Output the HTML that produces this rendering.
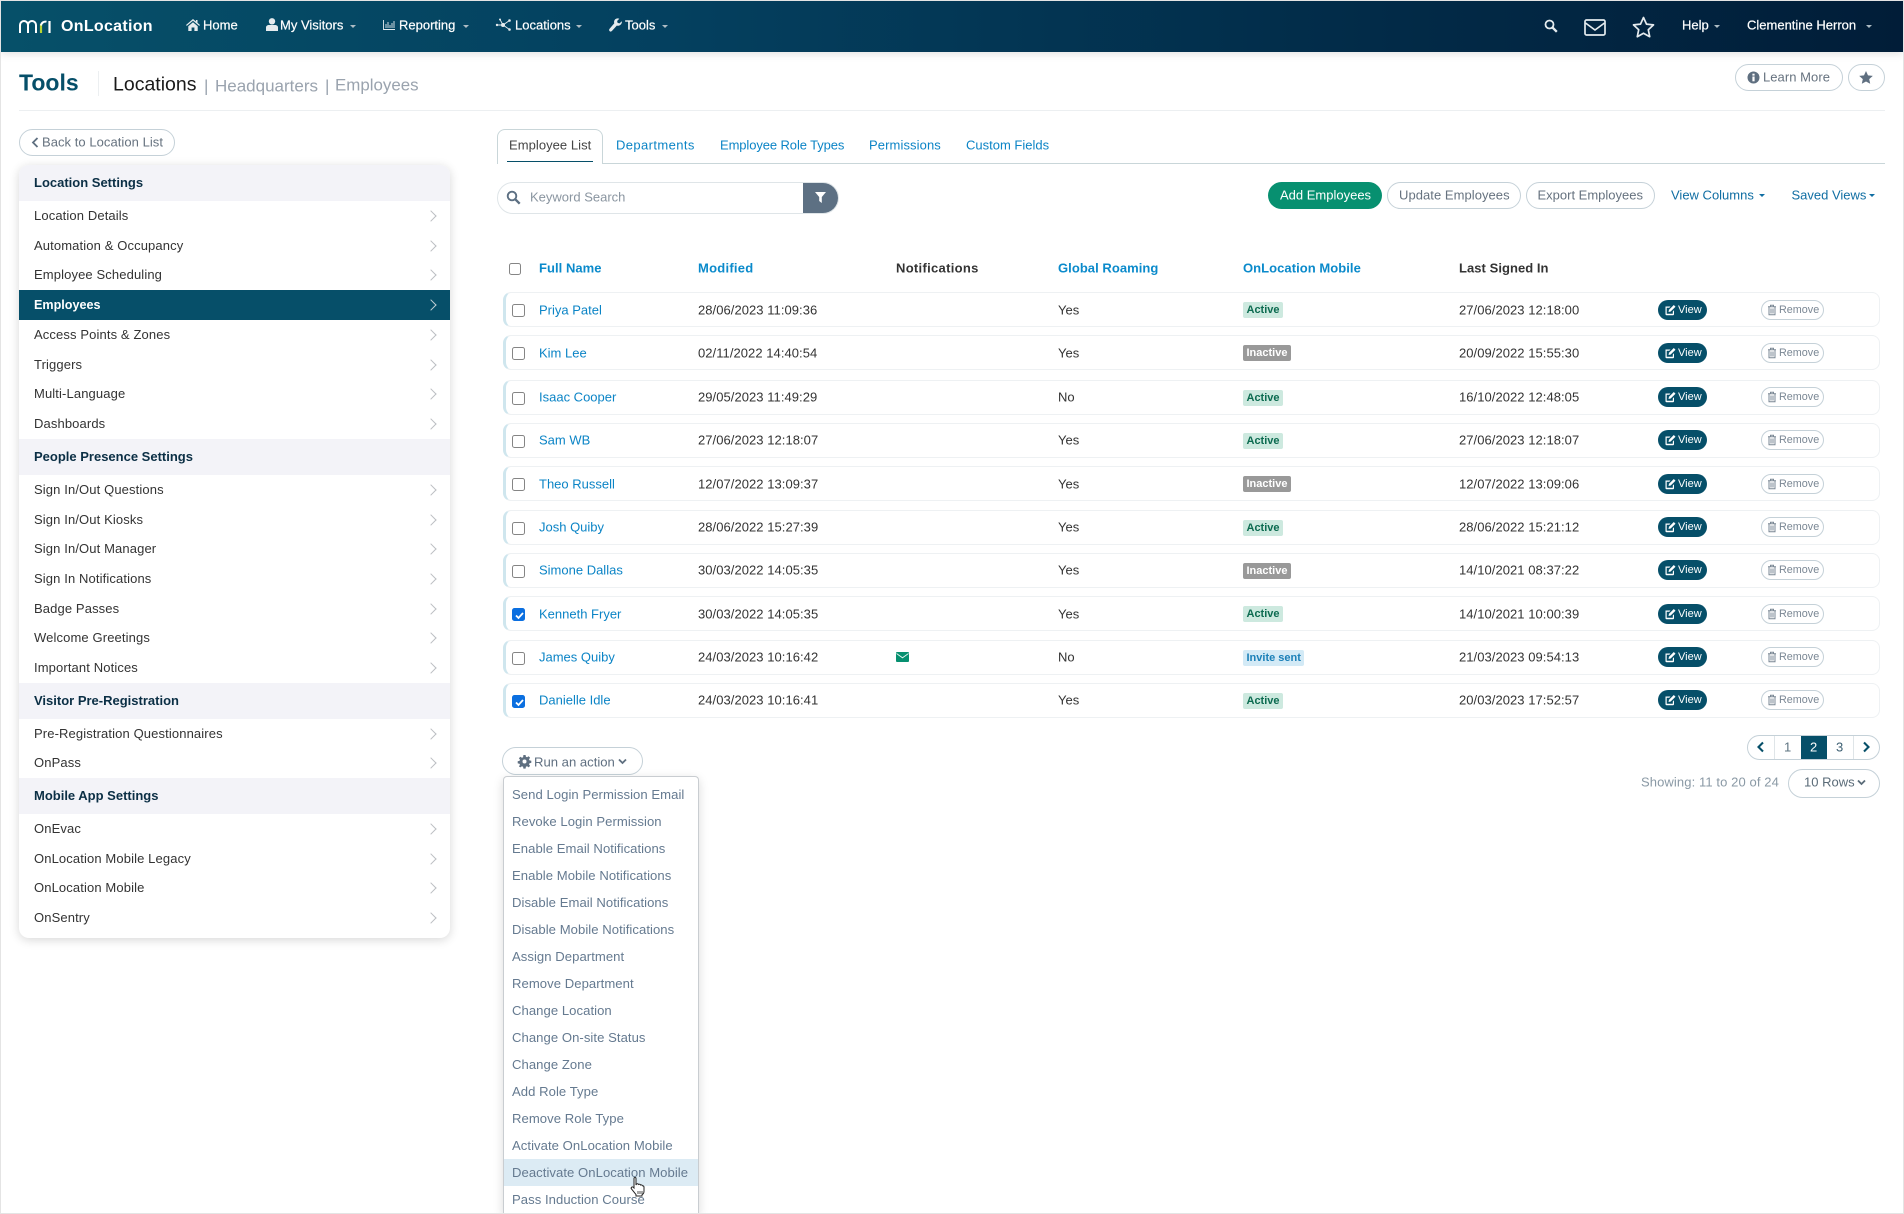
<!DOCTYPE html>
<html lang="en"><head><meta charset="utf-8"><title>Tools - Employees</title>
<style>
*{box-sizing:border-box}
html,body{margin:0;padding:0;background:#fff;overflow:hidden;width:1904px;height:1214px}
#page{width:1904px;height:1214px;position:relative;overflow:hidden;font-family:"Liberation Sans",sans-serif;font-size:13px;color:#333}
.a{position:absolute;white-space:nowrap;line-height:1;transform:translateY(-50%)}
.box{position:absolute}
.n{color:#fff;font-size:13px;-webkit-text-stroke:.2px #fff}
.car{position:absolute;width:0;height:0;border-left:3px solid transparent;border-right:3px solid transparent;border-top:3px solid currentColor}
.pill{position:absolute;border:1px solid #c5d1d8;border-radius:15px;background:#fff}
svg{position:absolute;overflow:visible}
/* sidebar */
#side{position:absolute;left:19px;top:165px;width:431px;height:773px;background:#fff;border-radius:10px;box-shadow:0 2px 10px rgba(0,0,0,.16);overflow:hidden}
#side .h{height:36px;background:#f3f3f8;color:#0b2f45;font-weight:bold;font-size:13px;line-height:35px;padding-left:15px}
#side .i{height:29.7px;line-height:30.7px;padding-left:15px;font-size:13px;letter-spacing:.12px;color:#333;position:relative}
#side .i:after{content:"";position:absolute;right:15.5px;top:11px;width:7px;height:7px;border-top:1.5px solid #bbbec2;border-right:1.5px solid #bbbec2;transform:rotate(45deg)}
#side .on{background:#064f69;color:#fff;font-weight:bold;font-size:12.6px;height:30px;line-height:31px;letter-spacing:0}
#side .on:after{border-color:#c3d0d6}
/* table */
.r{position:absolute;left:0;width:1904px;height:0}
.b{position:absolute;left:503px;width:1377px;top:-17.5px;height:35px;background:#fff;border:1px solid #eef1f3;border-left:3px solid #cfe6ee;border-radius:8px}
.r .a{top:0}
.c{position:absolute;left:512px;top:-5.5px;width:13px;height:13px;border:1px solid #858585;border-radius:2.5px;background:#fff}
.c.k{background:#0b6fe0;border-color:#0b6fe0}
.nm{left:539px;color:#0b84c6}
.d1{left:698px;letter-spacing:.05px}.g{left:1058px}.d2{left:1459px;letter-spacing:.05px}
.bd{position:absolute;left:1243px;top:-7.5px;height:16px;border-radius:2px;font-size:11px;font-weight:bold;line-height:16px;padding:0 3.5px}
.ac{background:#cde9df;color:#0c6b50}
.in{background:#999;color:#fff}
.is{background:#d3eaf6;color:#1b80b8}
.v{position:absolute;left:1658px;top:-10px;width:49px;height:20px;border-radius:10px;background:#064f69}
.v b{position:absolute;left:20px;top:0;line-height:20px;font-size:11px;color:#fff;font-weight:normal}
.x{position:absolute;left:1761px;top:-10px;width:63px;height:20px;border-radius:10px;background:#fff;border:1px solid #c5d1d8}
.x b{position:absolute;left:17px;top:0;line-height:18px;font-size:10.8px;color:#7a8794;font-weight:normal}
.th{font-weight:bold;top:268px;color:#0a8acb;letter-spacing:.05px}
/* menu */
#menu{position:absolute;left:503px;top:776px;width:196px;height:438px;background:#fff;border:1px solid #c9cdd1;border-bottom:0;border-radius:4px 4px 0 0;box-shadow:0 3px 10px rgba(0,0,0,.15);overflow:hidden}
#menu div{height:27px;line-height:27px;padding-left:8px;font-size:13.1px;letter-spacing:.05px;color:#657a90;white-space:nowrap}
#menu .sel{background:#dcebf4}
#frame{position:absolute;left:0;top:0;width:1904px;height:1214px;border:1px solid #e4e4e4;pointer-events:none}
</style></head><body><div id="page">

<svg width="0" height="0" style="position:absolute"><defs>
<symbol id="ed" viewBox="0 0 12 12"><path d="M1.5 2.5h5L5.3 3.7H2.700v6.100h6.100V7.500L10 6.300v3.900a1 1 0 0 1-1 1H2.500a1 1 0 0 1-1-1z" fill="currentColor"/><path d="M4.500 8 5 5.800 9.800 1l1.700 1.700L6.700 7.500z" fill="currentColor"/></symbol>
<symbol id="tr" viewBox="0 0 12 12"><path d="M2 2.800h8M4.500 2.600V1.200h3v1.400M3 3v7.800h6V3M5 4.500v5M7 4.500v5" fill="none" stroke="currentColor" stroke-width="1"/></symbol>
</defs></svg>

<!-- Header -->
<div class="box" style="left:1px;top:1px;width:1902px;height:51px;background:linear-gradient(90deg,#065069 0%,#04405f 35%,#022c49 70%,#011d38 100%);box-shadow:0 2px 8px rgba(0,0,0,.12)"></div>
<svg style="left:19px;top:20px" width="33" height="13" viewBox="0 0 33 13"><path d="M1 13V5a4 4 0 0 1 8 0V13M9 5a4 4 0 0 1 8 0V13" fill="none" stroke="#fff" stroke-width="2"/><path d="M22 13V4" fill="none" stroke="#b7d433" stroke-width="2.200"/><path d="M22 5.500a4.500 4.500 0 0 1 5.500-3.800" fill="none" stroke="#fff" stroke-width="2"/><path d="M30.500 13V1" fill="none" stroke="#fff" stroke-width="2.200"/></svg>
<div class="a" style="left:61px;top:27px;color:#fff;font-weight:bold;font-size:16px;letter-spacing:.3px">OnLocation</div>

<svg style="left:186px;top:19px" width="14" height="12" viewBox="0 0 14 12"><path d="M7 0 0 6l.8.900L7 1.700l6.200 5.200.8-.9-2.500-2.100V1h-1.600v1.500z" fill="#e5ebee"/><path d="M2.300 7.200 7 3.300l4.700 3.900V12H8.400V8.500H5.600V12H2.300z" fill="#e5ebee"/></svg>
<div class="a n" style="left:203px;top:25px">Home</div>
<svg style="left:266px;top:18px" width="12" height="13" viewBox="0 0 12 13"><circle cx="6" cy="3.300" r="3.200" fill="#e5ebee"/><path d="M0 13V9.500C0 7.800 1.500 7 3 7h6c1.500 0 3 .8 3 2.500V13z" fill="#e5ebee"/></svg>
<div class="a n" style="left:280px;top:25px">My Visitors</div><div class="car" style="left:350px;top:25px;color:#aebcc4"></div>
<svg style="left:383px;top:20px" width="12" height="10" viewBox="0 0 12 10"><path d="M.5 0v9.500H12M3 8V4M5 8V2M7 8V5M9 8V3M11 8V1" stroke="#e5ebee" stroke-width=".9" fill="none"/></svg>
<div class="a n" style="left:399px;top:25px">Reporting</div><div class="car" style="left:463px;top:25px;color:#aebcc4"></div>
<svg style="left:496px;top:18px" width="15" height="14" viewBox="0 0 15 14"><path d="M1 7h6l6.500-4.500M7 7l6.500 4.500M7 7 4 1.500" stroke="#e5ebee" stroke-width=".9" fill="none"/><circle cx="7" cy="7" r="2" fill="#e5ebee"/><circle cx="1" cy="7" r="1.200" fill="#e5ebee"/><circle cx="13.500" cy="2.500" r="1.300" fill="#e5ebee"/><circle cx="13.500" cy="11.500" r="1.300" fill="#e5ebee"/><circle cx="4" cy="1.500" r="1" fill="#e5ebee"/></svg>
<div class="a n" style="left:515px;top:25px">Locations</div><div class="car" style="left:576px;top:25px;color:#aebcc4"></div>
<svg style="left:609px;top:18px" width="13" height="14" viewBox="0 0 13 14"><path d="M12.800 3.200 10.500 5.400 8.600 4.900 8.100 3 10.300.7C8.500 0 6.400.6 5.500 2.200c-.5 1-.6 2.100-.2 3.100L.6 10.800c-.7.800-.7 1.700 0 2.300.7.700 1.600.6 2.300-.1l4.900-5.400c1.200.4 2.600.2 3.600-.7 1.200-1 1.800-2.800 1.400-3.700z" fill="#e5ebee"/></svg>
<div class="a n" style="left:625px;top:25px">Tools</div><div class="car" style="left:662px;top:25px;color:#aebcc4"></div>

<svg style="left:1544px;top:19px" width="14" height="14" viewBox="0 0 14 14"><circle cx="5.500" cy="5.500" r="4" fill="none" stroke="#e5ebee" stroke-width="1.800"/><path d="m8.500 8.500 4.300 4.300" stroke="#e5ebee" stroke-width="2.300"/></svg>
<svg style="left:1584px;top:19px" width="22" height="17" viewBox="0 0 22 17"><rect x="1" y="1" width="20" height="15" rx="1.500" fill="none" stroke="#e5ebee" stroke-width="1.700"/><path d="m1.500 4 9.500 7 9.500-7" fill="none" stroke="#e5ebee" stroke-width="1.700"/></svg>
<svg style="left:1632px;top:16px" width="23" height="22" viewBox="0 0 23 22"><path d="m11.500 1.500 3 6.600 7 .8-5.200 4.800 1.400 7-6.200-3.500-6.200 3.500 1.400-7L1.500 8.900l7-.8z" fill="none" stroke="#e5ebee" stroke-width="1.700" stroke-linejoin="round"/></svg>
<div class="a n" style="left:1682px;top:25px">Help</div><div class="car" style="left:1714px;top:25px;color:#aebcc4"></div>
<div class="a n" style="left:1747px;top:25px">Clementine Herron</div><div class="car" style="left:1866px;top:25px;color:#aebcc4"></div>

<!-- Title -->
<div class="a" style="left:19px;top:83px;font-size:23px;font-weight:bold;color:#064f69">Tools</div>
<div class="box" style="left:98px;top:71px;width:1px;height:25px;background:#eceff1"></div>
<div class="a" style="left:113px;top:85px;font-size:19.5px;color:#1a1a1a">Locations</div>
<div class="a" style="left:204px;top:86px;font-size:17px;color:#9aa3ae">|</div>
<div class="a" style="left:215px;top:86px;font-size:17px;color:#9aa3ae">Headquarters</div>
<div class="a" style="left:325px;top:86px;font-size:17px;color:#9aa3ae">|</div>
<div class="a" style="left:335px;top:86px;font-size:16.9px;color:#9aa3ae">Employees</div>
<div class="box" style="left:19px;top:110px;width:1866px;height:1px;background:#eceff1"></div>

<div class="pill" style="left:1735px;top:64px;width:108px;height:27px"></div>
<svg style="left:1747px;top:71px" width="13" height="13" viewBox="0 0 13 13"><circle cx="6.500" cy="6.500" r="6" fill="#5f6f80"/><rect x="5.400" y="5.500" width="2.200" height="4.800" fill="#fff"/><rect x="5.400" y="2.700" width="2.200" height="1.900" fill="#fff"/></svg>
<div class="a" style="left:1763px;top:77px;color:#66727f;letter-spacing:.05px">Learn More</div>
<div class="pill" style="left:1848px;top:64px;width:37px;height:27px"></div>
<svg style="left:1859px;top:71px" width="14" height="13" viewBox="0 0 14 13"><path d="m7 0 2 4.400 4.800.5-3.600 3.200 1 4.700L7 10.500l-4.200 2.300 1-4.700L.2 4.900 5 4.400z" fill="#5f6f80"/></svg>

<!-- Back button -->
<div class="pill" style="left:19px;top:129px;width:156px;height:27px"></div>
<svg style="left:31px;top:137px" width="8" height="11" viewBox="0 0 8 11"><path d="M6.500 1 2 5.500 6.500 10" fill="none" stroke="#5f6f80" stroke-width="1.800"/></svg>
<div class="a" style="left:42px;top:142px;color:#66727f;letter-spacing:.05px">Back to Location List</div>

<!-- Sidebar -->
<div id="side">
<div class="h">Location Settings</div>
<div class="i">Location Details</div>
<div class="i">Automation &amp; Occupancy</div>
<div class="i">Employee Scheduling</div>
<div class="i on">Employees</div>
<div class="i">Access Points &amp; Zones</div>
<div class="i">Triggers</div>
<div class="i">Multi-Language</div>
<div class="i">Dashboards</div>
<div class="h">People Presence Settings</div>
<div class="i">Sign In/Out Questions</div>
<div class="i">Sign In/Out Kiosks</div>
<div class="i">Sign In/Out Manager</div>
<div class="i">Sign In Notifications</div>
<div class="i">Badge Passes</div>
<div class="i">Welcome Greetings</div>
<div class="i">Important Notices</div>
<div class="h">Visitor Pre-Registration</div>
<div class="i">Pre-Registration Questionnaires</div>
<div class="i">OnPass</div>
<div class="h">Mobile App Settings</div>
<div class="i">OnEvac</div>
<div class="i">OnLocation Mobile Legacy</div>
<div class="i">OnLocation Mobile</div>
<div class="i">OnSentry</div>
</div>

<!-- Tabs -->
<div class="box" style="left:497px;top:163px;width:1388px;height:1px;background:#c9d6d9"></div>
<div class="box" style="left:497px;top:129px;width:106px;height:35px;background:#fff;border:1px solid #c9d6d9;border-bottom:0;border-radius:8px 8px 0 0"></div>
<div class="box" style="left:507px;top:161px;width:86px;height:1px;background:#064f69"></div>
<div class="a" style="left:509px;top:145px;color:#444;letter-spacing:.05px">Employee List</div>
<div class="a" style="left:616px;top:145px;color:#0b84c6;letter-spacing:.4px">Departments</div>
<div class="a" style="left:720px;top:145px;color:#0b84c6;letter-spacing:-.1px">Employee Role Types</div>
<div class="a" style="left:869px;top:145px;color:#0b84c6;letter-spacing:.1px">Permissions</div>
<div class="a" style="left:966px;top:145px;color:#0b84c6">Custom Fields</div>

<!-- Search -->
<div class="box" style="left:497px;top:182px;width:342px;height:32px;border:1px solid #dfe5e8;border-radius:16px;background:#fff;overflow:hidden"><div style="position:absolute;right:0;top:0;width:35px;height:32px;background:#5d7083"></div></div>
<svg style="left:506px;top:190px" width="15" height="15" viewBox="0 0 15 15"><circle cx="6" cy="6" r="4.300" fill="none" stroke="#5d7083" stroke-width="1.900"/><path d="m9.300 9.300 4.400 4.400" stroke="#5d7083" stroke-width="2.400"/></svg>
<div class="a" style="left:530px;top:197px;color:#8a95a0">Keyword Search</div>
<svg style="left:815px;top:192px" width="11" height="11" viewBox="0 0 11 11"><path d="M0 0h11L6.800 5v6L4.200 9V5z" fill="#fff"/></svg>

<!-- Action buttons -->
<div class="box" style="left:1268px;top:182px;width:114px;height:27px;border-radius:14px;background:#079070"></div>
<div class="a" style="left:1280px;top:194.500px;color:#fff">Add Employees</div>
<div class="pill" style="left:1387px;top:182px;width:134px;height:27px"></div>
<div class="a" style="left:1399px;top:194.500px;color:#66727f;letter-spacing:.05px">Update Employees</div>
<div class="pill" style="left:1526px;top:182px;width:129px;height:27px"></div>
<div class="a" style="left:1537.500px;top:194.500px;color:#66727f">Export Employees</div>
<div class="a" style="left:1671px;top:194.500px;color:#106ea3">View Columns</div><div class="car" style="left:1759px;top:193.500px;color:#106ea3"></div>
<div class="a" style="left:1791.500px;top:194.500px;color:#106ea3">Saved Views</div><div class="car" style="left:1869px;top:193.500px;color:#106ea3"></div>

<!-- Table head -->
<div class="box" style="left:509px;top:263px;width:12px;height:12px;border:1px solid #858585;border-radius:2.5px"></div>
<div class="a th" style="left:539px">Full Name</div>
<div class="a th" style="left:698px;letter-spacing:.25px">Modified</div>
<div class="a th" style="left:896px;color:#333;letter-spacing:.3px">Notifications</div>
<div class="a th" style="left:1058px">Global Roaming</div>
<div class="a th" style="left:1243px">OnLocation Mobile</div>
<div class="a th" style="left:1459px;color:#333">Last Signed In</div>

<!-- Rows -->
<div class="r" style="top:309.500px"><div class="b"></div><div class="c"></div><div class="a nm">Priya Patel</div><div class="a d1">28/06/2023 11:09:36</div><div class="a g">Yes</div><div class="bd ac">Active</div><div class="a d2">27/06/2023 12:18:00</div><div class="v"><svg style="left:6px;top:4px;color:#fff" width="12" height="12"><use href="#ed"/></svg><b>View</b></div><div class="x"><svg style="left:4px;top:3px;color:#7a8794" width="12" height="12"><use href="#tr"/></svg><b>Remove</b></div></div>
<div class="r" style="top:352.500px"><div class="b"></div><div class="c"></div><div class="a nm">Kim Lee</div><div class="a d1">02/11/2022 14:40:54</div><div class="a g">Yes</div><div class="bd in">Inactive</div><div class="a d2">20/09/2022 15:55:30</div><div class="v"><svg style="left:6px;top:4px;color:#fff" width="12" height="12"><use href="#ed"/></svg><b>View</b></div><div class="x"><svg style="left:4px;top:3px;color:#7a8794" width="12" height="12"><use href="#tr"/></svg><b>Remove</b></div></div>
<div class="r" style="top:397px"><div class="b"></div><div class="c"></div><div class="a nm">Isaac Cooper</div><div class="a d1">29/05/2023 11:49:29</div><div class="a g">No</div><div class="bd ac">Active</div><div class="a d2">16/10/2022 12:48:05</div><div class="v"><svg style="left:6px;top:4px;color:#fff" width="12" height="12"><use href="#ed"/></svg><b>View</b></div><div class="x"><svg style="left:4px;top:3px;color:#7a8794" width="12" height="12"><use href="#tr"/></svg><b>Remove</b></div></div>
<div class="r" style="top:440px"><div class="b"></div><div class="c"></div><div class="a nm">Sam WB</div><div class="a d1">27/06/2023 12:18:07</div><div class="a g">Yes</div><div class="bd ac">Active</div><div class="a d2">27/06/2023 12:18:07</div><div class="v"><svg style="left:6px;top:4px;color:#fff" width="12" height="12"><use href="#ed"/></svg><b>View</b></div><div class="x"><svg style="left:4px;top:3px;color:#7a8794" width="12" height="12"><use href="#tr"/></svg><b>Remove</b></div></div>
<div class="r" style="top:483.500px"><div class="b"></div><div class="c"></div><div class="a nm">Theo Russell</div><div class="a d1">12/07/2022 13:09:37</div><div class="a g">Yes</div><div class="bd in">Inactive</div><div class="a d2">12/07/2022 13:09:06</div><div class="v"><svg style="left:6px;top:4px;color:#fff" width="12" height="12"><use href="#ed"/></svg><b>View</b></div><div class="x"><svg style="left:4px;top:3px;color:#7a8794" width="12" height="12"><use href="#tr"/></svg><b>Remove</b></div></div>
<div class="r" style="top:527px"><div class="b"></div><div class="c"></div><div class="a nm">Josh Quiby</div><div class="a d1">28/06/2022 15:27:39</div><div class="a g">Yes</div><div class="bd ac">Active</div><div class="a d2">28/06/2022 15:21:12</div><div class="v"><svg style="left:6px;top:4px;color:#fff" width="12" height="12"><use href="#ed"/></svg><b>View</b></div><div class="x"><svg style="left:4px;top:3px;color:#7a8794" width="12" height="12"><use href="#tr"/></svg><b>Remove</b></div></div>
<div class="r" style="top:570px"><div class="b"></div><div class="c"></div><div class="a nm">Simone Dallas</div><div class="a d1">30/03/2022 14:05:35</div><div class="a g">Yes</div><div class="bd in">Inactive</div><div class="a d2">14/10/2021 08:37:22</div><div class="v"><svg style="left:6px;top:4px;color:#fff" width="12" height="12"><use href="#ed"/></svg><b>View</b></div><div class="x"><svg style="left:4px;top:3px;color:#7a8794" width="12" height="12"><use href="#tr"/></svg><b>Remove</b></div></div>
<div class="r" style="top:613.500px"><div class="b"></div><div class="c k"><svg style="left:1px;top:1px" width="11" height="11" viewBox="0 0 11 11"><path d="m2 5.500 2.500 2.500L9 3" fill="none" stroke="#fff" stroke-width="1.800"/></svg></div><div class="a nm">Kenneth Fryer</div><div class="a d1">30/03/2022 14:05:35</div><div class="a g">Yes</div><div class="bd ac">Active</div><div class="a d2">14/10/2021 10:00:39</div><div class="v"><svg style="left:6px;top:4px;color:#fff" width="12" height="12"><use href="#ed"/></svg><b>View</b></div><div class="x"><svg style="left:4px;top:3px;color:#7a8794" width="12" height="12"><use href="#tr"/></svg><b>Remove</b></div></div>
<div class="r" style="top:657px"><div class="b"></div><div class="c"></div><div class="a nm">James Quiby</div><div class="a d1">24/03/2023 10:16:42</div><svg style="left:896px;top:-5px" width="13" height="10" viewBox="0 0 13 10"><rect width="13" height="10" rx="1" fill="#079070"/><path d="m.5 1.500 6 4.300 6-4.300" fill="none" stroke="#e8f5f1" stroke-width=".9"/></svg><div class="a g">No</div><div class="bd is">Invite sent</div><div class="a d2">21/03/2023 09:54:13</div><div class="v"><svg style="left:6px;top:4px;color:#fff" width="12" height="12"><use href="#ed"/></svg><b>View</b></div><div class="x"><svg style="left:4px;top:3px;color:#7a8794" width="12" height="12"><use href="#tr"/></svg><b>Remove</b></div></div>
<div class="r" style="top:700px"><div class="b"></div><div class="c k"><svg style="left:1px;top:1px" width="11" height="11" viewBox="0 0 11 11"><path d="m2 5.500 2.500 2.500L9 3" fill="none" stroke="#fff" stroke-width="1.800"/></svg></div><div class="a nm">Danielle Idle</div><div class="a d1">24/03/2023 10:16:41</div><div class="a g">Yes</div><div class="bd ac">Active</div><div class="a d2">20/03/2023 17:52:57</div><div class="v"><svg style="left:6px;top:4px;color:#fff" width="12" height="12"><use href="#ed"/></svg><b>View</b></div><div class="x"><svg style="left:4px;top:3px;color:#7a8794" width="12" height="12"><use href="#tr"/></svg><b>Remove</b></div></div>

<!-- Run an action -->
<div class="pill" style="left:502px;top:747px;width:141px;height:28px"></div>
<svg style="left:518px;top:755px" width="13" height="13" viewBox="0 0 13 13"><path d="M5.400 0h2.200l.3 1.800 1.200.5L10.600 1.200l1.500 1.500-1.100 1.500.5 1.200 1.800.3v2.200l-1.800.3-.5 1.200 1.100 1.500-1.500 1.500-1.500-1.100-1.200.5-.3 1.800H5.400l-.3-1.800-1.200-.5-1.500 1.100L.9 11.400 2 9.900 1.500 8.700l-1.800-.3V6.200l1.800-.3L2 4.700.9 3.200l1.500-1.500 1.500 1.100 1.200-.5z" fill="#5f6f80"/><circle cx="6.500" cy="6.500" r="2" fill="#fff"/></svg>
<div class="a" style="left:534px;top:761.500px;font-size:13.1px;color:#5f6f80">Run an action</div>
<svg style="left:618px;top:758px" width="9" height="7" viewBox="0 0 9 7"><path d="m1 1.500 3.500 3.500L8 1.500" fill="none" stroke="#5f6f80" stroke-width="1.800"/></svg>

<div id="menu">
<div style="margin-top:4px">Send Login Permission Email</div>
<div>Revoke Login Permission</div>
<div>Enable Email Notifications</div>
<div>Enable Mobile Notifications</div>
<div>Disable Email Notifications</div>
<div>Disable Mobile Notifications</div>
<div>Assign Department</div>
<div>Remove Department</div>
<div>Change Location</div>
<div>Change On-site Status</div>
<div>Change Zone</div>
<div>Add Role Type</div>
<div>Remove Role Type</div>
<div>Activate OnLocation Mobile</div>
<div class="sel">Deactivate OnLocation Mobile</div>
<div>Pass Induction Course</div>
</div>
<svg style="left:630px;top:1177px" width="16" height="20" viewBox="0 0 16 20"><path d="M4 1.500c0-1.300 2-1.300 2 0V8l.5-1c1-.5 1.700-.3 2 .5.900-.5 1.700-.3 2 .5.900-.3 1.700 0 2 .8.800 0 1.500.5 1.500 1.500v4c0 1.500-1 3-2 3.500V19H6v-1.500L1.500 12c-1-1.300.5-2.800 1.800-1.700L4 11z" fill="#fff" stroke="#222" stroke-width="1"/><path d="M8 14v3M10 14v3M12 14v3" stroke="#222" stroke-width=".8"/></svg>

<!-- Pagination -->
<div class="pill" style="left:1747px;top:735px;width:133px;height:25px;overflow:hidden"><div style="position:absolute;left:53px;top:0;width:26px;height:25px;background:#064f69"></div><div style="position:absolute;left:26px;top:0;width:1px;height:25px;background:#dfe5e8"></div><div style="position:absolute;left:105px;top:0;width:1px;height:25px;background:#dfe5e8"></div></div>
<svg style="left:1756px;top:741px" width="9" height="12" viewBox="0 0 9 12"><path d="M7 1.500 2.500 6 7 10.500" fill="none" stroke="#064f69" stroke-width="2.100"/></svg>
<div class="a" style="left:1784px;top:747px;color:#5f7482">1</div>
<div class="a" style="left:1810px;top:747px;color:#fff">2</div>
<div class="a" style="left:1836px;top:747px;color:#3e6073">3</div>
<svg style="left:1862px;top:741px" width="9" height="12" viewBox="0 0 9 12"><path d="m2 1.500 4.500 4.500L2 10.500" fill="none" stroke="#064f69" stroke-width="2.100"/></svg>
<div class="a" style="left:1641px;top:782px;color:#8a99a5;letter-spacing:.1px">Showing: 11 to 20 of 24</div>
<div class="pill" style="left:1788px;top:769px;width:92px;height:29px"></div>
<div class="a" style="left:1804px;top:782px;color:#5a6b78">10 Rows</div>
<svg style="left:1857px;top:779px" width="9" height="7" viewBox="0 0 9 7"><path d="m1 1.500 3.500 3.500L8 1.500" fill="none" stroke="#5a6b78" stroke-width="1.800"/></svg>

<div id="frame"></div>
</div></body></html>
